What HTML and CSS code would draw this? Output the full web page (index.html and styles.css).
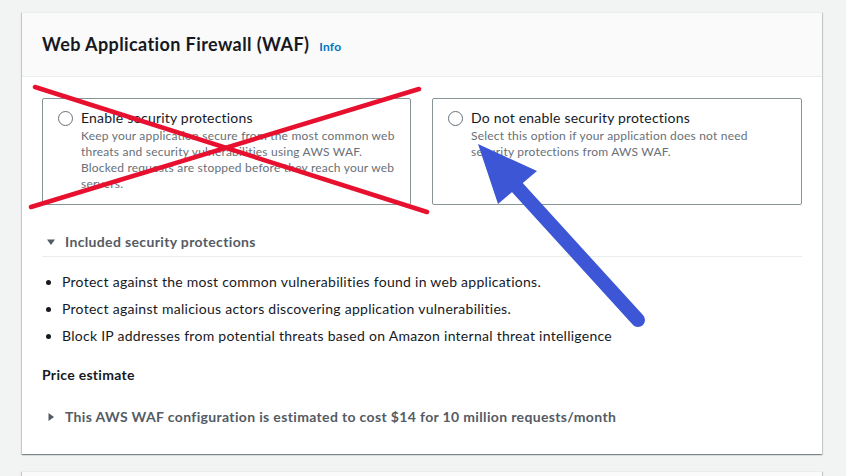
FILE: index.html
```html
<!DOCTYPE html>
<html>
<head>
<meta charset="utf-8">
<link rel="stylesheet" href="styles.css">
</head>
<body>
<div class="page">
  <section class="card">
    <header class="card-header">
      <h2 class="title">Web Application Firewall (WAF)</h2>
      <a class="info">Info</a>
    </header>
    <div class="card-body">
      <div class="tiles">
        <label class="tile">
          <span class="radio"></span>
          <span class="tile-text">
            <span class="tile-label">Enable security protections</span>
            <span class="tile-desc">Keep your application secure from the most common web threats and security vulnerabilities using AWS WAF. Blocked requests are stopped before they reach your web servers.</span>
          </span>
        </label>
        <label class="tile">
          <span class="radio"></span>
          <span class="tile-text">
            <span class="tile-label">Do not enable security protections</span>
            <span class="tile-desc">Select this option if your application does not need security protections from AWS WAF.</span>
          </span>
        </label>
      </div>

      <div class="expander expander-open">
        <svg class="caret" width="10" height="10" viewBox="0 0 10 10"><path d="M1 2.5 L9 2.5 L5 8 Z" fill="#545b64"/></svg>
        <span>Included security protections</span>
      </div>
      <ul class="bullets">
        <li>Protect against the most common vulnerabilities found in web applications.</li>
        <li>Protect against malicious actors discovering application vulnerabilities.</li>
        <li>Block IP addresses from potential threats based on Amazon internal threat intelligence</li>
      </ul>

      <h3 class="subhead">Price estimate</h3>
      <div class="expander expander-closed">
        <svg class="caret" width="10" height="10" viewBox="0 0 10 10"><path d="M2.5 1 L8 5 L2.5 9 Z" fill="#545b64"/></svg>
        <span>This AWS WAF configuration is estimated to cost $14 for 10 million requests/month</span>
      </div>
    </div>
  </section>
  <section class="card card-next"></section>
</div>

<svg class="annotations" width="846" height="476" viewBox="0 0 846 476">
  <g stroke="#e8102f" stroke-width="4.5" stroke-linecap="round">
    <line x1="35" y1="87" x2="427" y2="212"/>
    <line x1="31" y1="207" x2="419" y2="89"/>
  </g>
  <line x1="515" y1="185" x2="638" y2="320" stroke="#3c56d6" stroke-width="14" stroke-linecap="round"/>
  <path d="M478 144 L537 171 L498 204 Z" fill="#3c56d6"/>
</svg>
</body>
</html>
```

FILE: styles.css
```css
* { box-sizing: border-box; }

html, body {
  margin: 0;
  padding: 0;
  background: #f2f3f3;
  font-family: Lato, "Open Sans", "Noto Sans", sans-serif;
  color: #16191f;
  overflow: hidden;
}

.page {
  padding: 12px 24px 0 22px;
}

.card {
  width: 800px;
  background: #ffffff;
  border-top: 1px solid #eaeded;
  box-shadow: 0 1px 1px 0 rgba(0, 28, 36, 0.3), 1px 1px 1px 0 rgba(0, 28, 36, 0.15), -1px 1px 1px 0 rgba(0, 28, 36, 0.15);
}

.card-header {
  display: flex;
  align-items: baseline;
  gap: 10px;
  background: #fafafa;
  padding: 19px 20px 20px;
  border-bottom: 1px solid #eaeded;
}

.title {
  margin: 0;
  font-size: 18px;
  line-height: 24px;
  font-weight: 700;
  letter-spacing: 0.4px;
  color: #16191f;
}

.info {
  font-size: 12px;
  font-weight: 700;
  letter-spacing: 0.2px;
  color: #0073bb;
}

.card-body {
  padding: 21px 20px 27px;
}

.tiles {
  display: grid;
  grid-template-columns: 369px 370px;
  gap: 21px;
}

.tile {
  display: flex;
  align-items: flex-start;
  height: 107px;
  border: 1px solid #879596;
  border-radius: 2px;
  padding: 9px 12px 12px 15px;
}

.radio {
  flex: none;
  width: 15px;
  height: 15px;
  margin-top: 3px;
  border: 1.5px solid #687078;
  border-radius: 50%;
  background: #fff;
}

.tile-text {
  display: flex;
  flex-direction: column;
  margin-left: 8px;
}

.tile-label {
  font-size: 14px;
  line-height: 20px;
  letter-spacing: 0.2px;
  color: #16191f;
}

.tile-desc {
  font-size: 12px;
  line-height: 16px;
  letter-spacing: 0.2px;
  color: #687078;
}

.expander {
  display: flex;
  align-items: center;
  gap: 9px;
  font-size: 14px;
  line-height: 20px;
  font-weight: 700;
  letter-spacing: 0.35px;
  color: #545b64;
}

.expander .caret {
  flex: none;
  margin-left: 4px;
}

.expander-open {
  margin-top: 23px;
  padding: 4px 0;
  border-bottom: 1px solid #eaeded;
}

.bullets {
  margin: 15px 0 0;
  padding: 0 0 0 20px;
  font-size: 14px;
  line-height: 20px;
  letter-spacing: 0.27px;
  color: #16191f;
}

.bullets li + li {
  margin-top: 7px;
}

.subhead {
  margin: 19px 0 0;
  font-size: 14px;
  line-height: 20px;
  font-weight: 700;
  letter-spacing: 0.3px;
  color: #16191f;
}

.expander-closed {
  margin-top: 22px;
}

.card-next {
  margin-top: 17px;
  height: 5px;
  background: #fafafa;
}

.annotations {
  position: absolute;
  left: 0;
  top: 0;
  pointer-events: none;
}
```
